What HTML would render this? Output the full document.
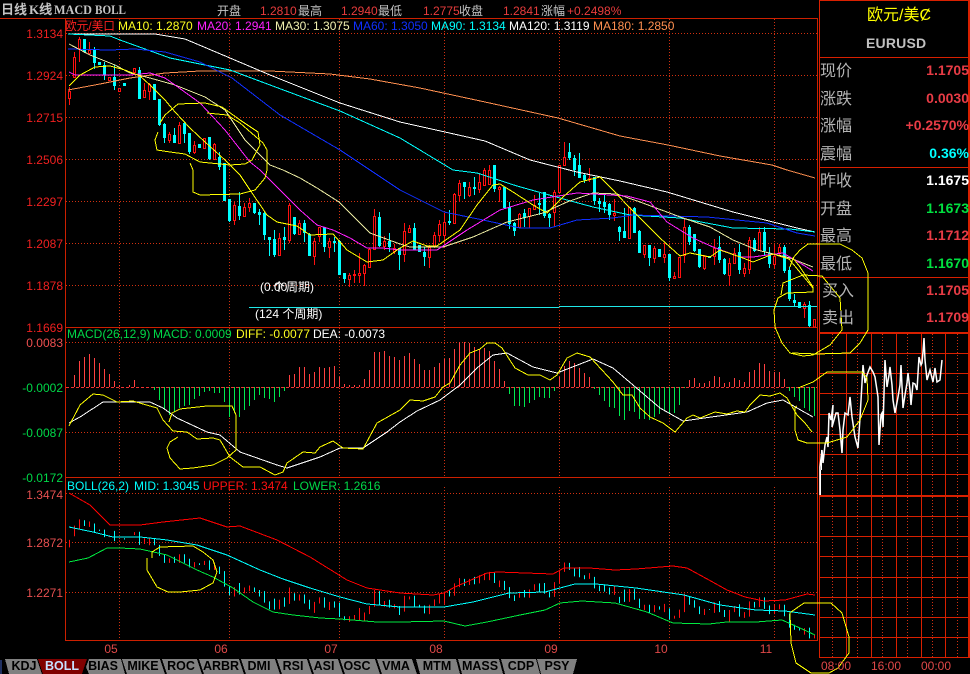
<!DOCTYPE html>
<html><head><meta charset="utf-8"><style>
html,body{margin:0;padding:0;background:#000;width:970px;height:674px;overflow:hidden}
svg{display:block;position:absolute;left:0;top:0}
text{font-family:"Liberation Sans","WenQuanYi Zen Hei","Noto Sans CJK SC",sans-serif;font-size:12px}
.ln{fill:none;shape-rendering:crispEdges}
.cv{fill:none;shape-rendering:crispEdges;stroke-width:1}
.lb{font-size:16px;fill:#b4b4b4}
.vl{font-size:14px;font-weight:bold;text-anchor:end}
.tb{font-weight:bold;text-anchor:middle;fill:#000;font-size:12.5px}
</style></head><body>
<svg width="970" height="674" viewBox="0 0 970 674" xmlns="http://www.w3.org/2000/svg">
<defs>
<path id="cw" d="M84.5 39V53M94.5 47V69M99.5 62V65M104.5 62V80M114.5 65V90M124.5 83V86M139.5 67V99M154.5 84V100M159.5 99V126M164.5 123V143M174.5 128V143M184.5 122V143M189.5 133V154M199.5 144V148M209.5 137V160M219.5 152V170M224.5 163V201M229.5 199V222M239.5 192V220M254.5 203V214M259.5 209V225M264.5 212V240M269.5 237V256M274.5 230V257M284.5 227V250M294.5 217V235M304.5 220V242M309.5 233V256M324.5 227V252M334.5 237V252M339.5 240V275M344.5 273V283M379.5 212V247M389.5 233V252M399.5 248V270M414.5 223V250M419.5 245V252M424.5 247V266M449.5 210V225M464.5 182V199M474.5 177V195M494.5 165V192M504.5 187V209M509.5 202V229M514.5 222V236M524.5 209V227M539.5 193V215M544.5 192V218M549.5 213V227M569.5 143V160M574.5 155V176M579.5 153V178M584.5 173V183M594.5 177V205M599.5 198V212M604.5 195V213M609.5 203V220M619.5 226V241M624.5 208V238M634.5 207V233M639.5 230V253M649.5 245V266M659.5 249V257M669.5 254V281M689.5 225V245M694.5 234V252M699.5 249V268M709.5 256V258M719.5 236V263M724.5 258V275M739.5 244V274M754.5 238V252M764.5 227V255M769.5 247V268M784.5 245V273M789.5 267V301M794.5 294V306M799.5 302V308M809.5 301V327"/>
<path id="cb" d="M84.5 39V52M94.5 49V63M99.5 62V65M104.5 65V75M114.5 77V86M124.5 83V86M139.5 70V99M154.5 84V100M159.5 99V125M164.5 124V138M174.5 135V143M184.5 123V134M189.5 133V152M199.5 144V148M209.5 137V159M219.5 157V167M224.5 163V201M229.5 199V221M239.5 206V216M254.5 203V213M259.5 212V215M264.5 213V235M269.5 237V240M274.5 239V255M284.5 237V240M294.5 217V234M304.5 223V233M309.5 234V256M324.5 227V247M334.5 241V243M339.5 241V275M344.5 273V279M379.5 217V246M389.5 241V247M399.5 248V255M414.5 228V250M419.5 245V252M424.5 252V257M449.5 221V223M464.5 182V187M474.5 187V189M494.5 165V189M504.5 187V208M509.5 207V224M514.5 223V231M524.5 213V218M539.5 203V205M544.5 192V216M549.5 214V218M569.5 152V158M574.5 158V170M579.5 165V178M584.5 175V180M594.5 177V201M599.5 201V204M604.5 202V207M609.5 204V215M619.5 227V232M624.5 231V238M634.5 208V233M639.5 231V253M649.5 245V258M659.5 249V257M669.5 254V278M689.5 227V242M694.5 234V251M699.5 249V267M709.5 256V258M719.5 247V260M724.5 259V274M739.5 252V270M754.5 240V251M764.5 232V251M769.5 253V264M784.5 247V271M789.5 270V299M794.5 300V303M799.5 302V308M809.5 305V326"/>
<path id="rw" d="M69.5 87V105M74.5 52V78M79.5 37V62M89.5 42V55M109.5 77V80M119.5 88V91M134.5 68V75M144.5 83V97M149.5 83V100M169.5 132V143M179.5 122V143M194.5 141V154M204.5 138V148M214.5 143V160M234.5 202V225M244.5 203V217M249.5 198V212M279.5 233V256M289.5 203V243M299.5 220V235M314.5 238V265M319.5 227V242M329.5 238V258M349.5 273V287M354.5 270V283M359.5 253V283M364.5 264V286M369.5 248V268M374.5 209V250M384.5 236V250M394.5 244V254M404.5 223V262M409.5 225V232M429.5 245V268M434.5 232V248M439.5 220V242M444.5 213V243M454.5 193V223M459.5 180V202M469.5 182V197M479.5 173V193M484.5 168V185M489.5 165V185M499.5 186V202M519.5 213V228M529.5 208V228M534.5 195V210M554.5 190V226M559.5 165V192M564.5 142V165M589.5 168V182M614.5 199V221M629.5 207V238M644.5 245V258M654.5 246V263M664.5 243V263M674.5 272V279M679.5 257V277M684.5 218V263M704.5 255V270M714.5 239V265M729.5 258V286M734.5 248V263M744.5 263V277M749.5 237V274M759.5 227V251M774.5 245V268M779.5 244V256M804.5 302V318M814.5 319V327"/>
<path id="rb" d="M68.5 91.5h2V98.5h-2zM73.5 57.5h2V77.5h-2zM78.5 39.5h2V48.5h-2zM88.5 50.5h2V53.5h-2zM108.5 77.5h2V80.5h-2zM118.5 88.5h2V91.5h-2zM133.5 68.5h2V72.5h-2zM143.5 90.5h2V97.5h-2zM148.5 84.5h2V91.5h-2zM168.5 134.5h2V140.5h-2zM178.5 125.5h2V143.5h-2zM193.5 145.5h2V152.5h-2zM203.5 138.5h2V148.5h-2zM213.5 144.5h2V159.5h-2zM233.5 205.5h2V220.5h-2zM243.5 207.5h2V216.5h-2zM248.5 203.5h2V207.5h-2zM278.5 238.5h2V255.5h-2zM288.5 205.5h2V240.5h-2zM298.5 223.5h2V234.5h-2zM313.5 241.5h2V256.5h-2zM318.5 227.5h2V236.5h-2zM328.5 241.5h2V247.5h-2zM348.5 275.5h2V279.5h-2zM353.5 274.5h2V275.5h-2zM358.5 273.5h2V275.5h-2zM363.5 265.5h2V273.5h-2zM368.5 249.5h2V267.5h-2zM373.5 216.5h2V249.5h-2zM383.5 241.5h2V246.5h-2zM393.5 248.5h2V251.5h-2zM403.5 231.5h2V254.5h-2zM408.5 228.5h2V232.5h-2zM428.5 247.5h2V257.5h-2zM433.5 235.5h2V246.5h-2zM438.5 224.5h2V235.5h-2zM443.5 222.5h2V235.5h-2zM453.5 194.5h2V223.5h-2zM458.5 183.5h2V195.5h-2zM468.5 187.5h2V195.5h-2zM478.5 182.5h2V189.5h-2zM483.5 170.5h2V185.5h-2zM488.5 170.5h2V184.5h-2zM498.5 187.5h2V189.5h-2zM518.5 214.5h2V227.5h-2zM528.5 208.5h2V216.5h-2zM533.5 205.5h2V209.5h-2zM553.5 192.5h2V212.5h-2zM558.5 165.5h2V192.5h-2zM563.5 157.5h2V165.5h-2zM588.5 178.5h2V179.5h-2zM613.5 213.5h2V215.5h-2zM628.5 207.5h2V238.5h-2zM643.5 245.5h2V254.5h-2zM653.5 248.5h2V258.5h-2zM663.5 254.5h2V257.5h-2zM673.5 276.5h2V278.5h-2zM678.5 257.5h2V277.5h-2zM683.5 227.5h2V255.5h-2zM703.5 256.5h2V268.5h-2zM713.5 248.5h2V256.5h-2zM728.5 263.5h2V275.5h-2zM733.5 253.5h2V263.5h-2zM743.5 268.5h2V273.5h-2zM748.5 240.5h2V269.5h-2zM758.5 232.5h2V250.5h-2zM773.5 256.5h2V264.5h-2zM778.5 247.5h2V252.5h-2zM803.5 304.5h2V308.5h-2zM813.5 319.5h2V327h-2z"/>
</defs>

<!-- frame lines -->
<g class="ln" stroke="#cc2000">
<path d="M0 18.5H818M65.5 18V640M817.5 18V640M65 327.5H818M65 477.5H818M65 640.5H818"/>
</g>
<g class="ln" stroke="#d82000">
<path d="M819.5 0V657M968.5 0V657M969.5 0V657M819 .5H970M819 57.5H970M819 167.5H970M819 277.5H970M819 332.5H970M819 333.5H970M819 495.5H970M819 496.5H970"/>
<path d="M846.5 334V657M871.5 334V657M896.5 334V657M921.5 334V657M945.5 334V657M819 353.5H970M819 373.5H970M819 393.5H970M819 414.5H970M819 434.5H970M819 454.5H970M819 474.5H970M819 516.5H970M819 536.5H970M819 556.5H970M819 577.5H970M819 597.5H970M819 617.5H970M819 637.5H970M819 657.5H970"/>
</g>
<g class="ln" stroke="#d03010" stroke-dasharray="1 2">
<path d="M66 33.5H817M66 75.5H817M66 117.5H817M66 159.5H817M66 201.5H817M66 243.5H817M66 285.5H817M66 342.5H817M66 432.5H817M66 493.5H817M66 542.5H817M66 592.5H817"/>
<path d="M119.5 19V327M229.5 19V327M339.5 19V327M444.5 19V327M559.5 19V327M669.5 19V327M774.5 19V327M119.5 328V477M229.5 328V477M339.5 328V477M444.5 328V477M559.5 328V477M669.5 328V477M774.5 328V477M119.5 487V640M229.5 487V640M339.5 487V640M444.5 487V640M559.5 487V640M669.5 487V640M774.5 487V640"/>
<path d="M832.5 334V495M857.5 334V495M882.5 334V495M907.5 334V495M932.5 334V495M957.5 334V495M832.5 497V657M857.5 497V657M882.5 497V657M907.5 497V657M932.5 497V657M957.5 497V657"/>
</g>
<path class="ln" stroke="#f03030" stroke-dasharray="3 2" d="M66 387.5H817"/>

<!-- main candles -->
<use href="#rw" stroke="#ff1010" fill="none" shape-rendering="crispEdges"/>
<use href="#cw" stroke="#00ffff" fill="none" shape-rendering="crispEdges"/>
<use href="#cb" stroke="#00ffff" stroke-width="3" fill="none" shape-rendering="crispEdges"/>
<use href="#rb" stroke="#ff1010" fill="#000" shape-rendering="crispEdges"/>

<!-- MA lines -->
<polyline class="ln" stroke="#ff9050" points="68,90 100,84 130,78 165,73 200,71 270,71 330,74 370,79 420,88 485,102 558,118 620,136 668,145 720,156 772,165 787,170 815,178"/>
<polyline class="ln" stroke="#ffffff" points="68,34 155,34 185,39 230,58 270,75 340,103 400,122 445,132 485,141 530,160 577,172 620,181 667,192 733,212 797,228 815,232"/>
<polyline class="ln" stroke="#00ffff" points="68,34 110,36 120,40 170,58 230,70 270,85 340,111 400,138 453,170 477,173 517,186 567,200 593,207 630,215 680,218 733,228 790,229 815,232"/>
<polyline class="ln" stroke="#1030ff" points="68,49 110,50 135,49 165,52 200,62 232,78 280,115 340,150 370,170 400,190 444,212 483,220 520,228 550,228 577,220 613,218 633,215 707,217 767,223 797,233 815,236"/>
<polyline class="ln" stroke="#e8e8a0" points="69,44 90,55 115,65 130,73 150,78 175,85 205,97 225,110 245,140 270,165 283,170 300,178 317,188 339,202 357,220 370,233 400,244 410,247 443,247 473,237 507,222 543,213 567,202 593,193 617,194 640,202 683,218 710,227 733,240 757,250 790,258 813,267"/>
<polyline class="ln" stroke="#ff20ff" points="69,72 75,75 130,75 150,73 165,78 175,85 200,103 225,130 250,162 260,170 300,210 317,225 333,230 350,238 367,248 383,248 400,250 437,250 467,230 500,210 533,200 577,193 627,196 650,202 667,222 693,238 713,247 740,257 753,257 767,255 783,253 800,263 813,271"/>
<polyline class="ln" stroke="#ffff00" points="69,86 80,75 95,67 110,66 125,70 140,76 150,85 165,100 175,112 190,128 205,142 225,160 240,175 250,190 267,215 277,222 297,226 310,235 333,234 347,250 367,262 383,260 400,248 413,241 427,246 437,246 460,230 477,205 493,185 500,184 513,192 533,205 547,213 563,197 580,182 600,177 613,190 627,205 640,218 660,238 680,256 690,253 710,257 720,250 743,258 753,262 773,254 789,259 813,288"/>

<!-- cyan line -->
<path class="ln" stroke="#20e8e8" d="M249 307.5H559M559 306.5H817"/>

<!-- MACD hist -->
<path class="ln" stroke="#ff4040" d="M74.5 375V387M79.5 361V387M84.5 357V387M89.5 354V387M94.5 358V387M99.5 363V387M104.5 369V387M109.5 374V387M114.5 381V387M119.5 385V387M129.5 385V387M134.5 380V387M289.5 375V387M294.5 374V387M299.5 367V387M304.5 367V387M309.5 374V387M314.5 372V387M319.5 367V387M324.5 368V387M329.5 367V387M334.5 366V387M339.5 377V387M344.5 384V387M349.5 385V387M354.5 385V387M359.5 385V387M364.5 379V387M369.5 370V387M374.5 352V387M379.5 352V387M384.5 351V387M389.5 356V387M394.5 357V387M399.5 360V387M404.5 356V387M409.5 353V387M414.5 359V387M419.5 364V387M424.5 370V387M429.5 370V387M434.5 367V387M439.5 363V387M444.5 359V387M449.5 358V387M454.5 349V387M459.5 342V387M464.5 342V387M469.5 343V387M474.5 347V387M479.5 349V387M484.5 348V387M489.5 351V387M494.5 361V387M499.5 369V387M504.5 381V387M559.5 377V387M564.5 366V387M569.5 361V387M574.5 363V387M579.5 368V387M584.5 373V387M589.5 377V387M689.5 380V387M694.5 378V387M699.5 383V387M704.5 383V387M709.5 381V387M714.5 376V387M719.5 377V387M724.5 383V387M729.5 382V387M734.5 378V387M739.5 380V387M744.5 382V387M749.5 372V387M754.5 370V387M759.5 363V387M764.5 364V387M769.5 371V387M774.5 372V387M779.5 372V387M784.5 379V387"/>
<path class="ln" stroke="#00e850" d="M154.5 387V390M159.5 387V400M164.5 387V409M169.5 387V415M174.5 387V412M179.5 387V408M184.5 387V406M189.5 387V405M194.5 387V399M199.5 387V396M204.5 387V392M209.5 387V391M214.5 387V393M219.5 387V393M224.5 387V402M229.5 387V417M234.5 387V413M239.5 387V417M244.5 387V410M249.5 387V406M254.5 387V400M259.5 387V395M264.5 387V398M269.5 387V399M274.5 387V402M279.5 387V397M284.5 387V391M509.5 387V394M514.5 387V406M519.5 387V406M524.5 387V407M529.5 387V403M534.5 387V400M539.5 387V397M544.5 387V398M549.5 387V398M554.5 387V391M594.5 387V389M599.5 387V395M604.5 387V401M609.5 387V407M614.5 387V408M619.5 387V416M624.5 387V420M629.5 387V411M634.5 387V412M639.5 387V419M644.5 387V419M649.5 387V420M654.5 387V417M659.5 387V414M664.5 387V411M669.5 387V413M674.5 387V413M679.5 387V405M684.5 387V388M789.5 387V391M794.5 387V397M799.5 387V401M804.5 387V408M809.5 387V411M814.5 387V416"/>

<!-- DIFF / DEA -->
<polyline class="ln" stroke="#ffffff" points="69,423 80,417 103,402 123,402 150,402 163,408 177,418 207,432 220,435 240,452 277,465 287,468 320,457 340,448 363,448 387,432 400,422 417,411 440,400 460,385 477,368 493,355 507,353 533,367 557,373 593,359 613,368 633,385 660,408 683,421 747,412 767,403 783,400 813,417"/>
<polyline class="ln" stroke="#ffff00" points="69,426 80,405 93,394 103,395 117,402 133,401 143,404 157,408 163,420 173,431 187,432 197,439 213,438 220,440 230,457 243,467 260,467 275,475 283,472 287,463 303,452 315,453 320,447 333,441 343,448 363,449 377,423 400,410 410,400 423,401 435,397 443,387 450,383 460,365 470,353 480,349 487,343 495,343 502,348 515,368 528,375 540,375 550,380 557,375 567,358 577,353 590,357 613,382 623,395 632,395 640,408 650,417 663,423 675,432 687,418 693,415 700,418 715,412 727,414 737,411 745,412 750,405 760,395 770,396 780,393 787,398 797,415 805,423 812,432"/>

<!-- BOLL panel -->
<g transform="translate(0 518) scale(1 .41) translate(0 -33.5)" shape-rendering="crispEdges">
<use href="#rw" stroke="#ff1010" fill="none"/>
<use href="#cw" stroke="#00ffff" fill="none"/>
</g>
<polyline class="ln" stroke="#ff0000" points="69,493 90,505 110,525 140,525 163,522 200,518 227,527 240,526 277,540 310,557 347,580 367,588 400,593 433,595 444,593 455,587 487,573 498,572 553,574 564,568 589,568 615,570 636,569 673,566 687,568 709,580 727,590 745,597 764,601 785,600 807,594 815,595"/>
<polyline class="ln" stroke="#00ffff" points="69,527 93,532 113,537 140,537 167,540 197,545 227,555 260,570 283,579 310,588 340,597 367,604 400,607 444,607 473,602 509,593 545,592 575,584 596,584 636,588 684,595 720,605 756,610 785,611 815,615"/>
<polyline class="ln" stroke="#00e840" points="69,562 88,558 107,548 120,548 140,549 167,555 197,570 213,577 233,588 253,602 273,612 293,615 320,618 340,619 377,622 400,622 444,621 465,626 487,622 520,615 545,610 560,603 582,601 615,603 647,612 673,623 709,624 727,622 756,622 782,620 800,628 815,635"/>

<!-- intraday -->
<polyline fill="none" stroke="#fff" stroke-width="1.5" points="820,495 820,467 822,450 823,463 825,445 827,437 828,447 829,413 831,420 833,405 832,427 836,413 838,413 840,430 842,453 843,430 845,413 848,415 850,397 852,417 855,437 858,448 860,418 862,383 863,365 865,383 867,375 870,367 873,372 875,377 878,397 879,445 881,415 882,413 883,427 885,360 887,387 889,375 890,367 892,385 893,400 895,413 898,397 900,385 901,365 903,408 905,395 907,383 908,373 910,390 911,405 913,383 915,384 917,390 919,357 921,365 922,363 923,352 924,338 925,360 927,380 930,370 933,382 935,368 937,382 940,380 942,360"/>
<path class="ln" stroke="#fff" d="M820.5 470V495M821.5 450V470"/>

<!-- hand-drawn annotations -->
<g class="cv" stroke="#ffff00">
<polyline points="160,123 165,115 178,104 205,103 222,107 240,120 258,132 260,145 252,160 245,164 230,165 200,162 185,154 170,152 157,150 155,140 158,132"/>
<polyline points="207,113 227,115 240,123 263,143 267,150 267,170 265,178 255,190 240,194 200,195 193,192 193,170 190,163"/>
<polyline points="790,267 793,258 800,250 808,244 840,244 852,250 862,258 868,273 868,330 860,343 850,353 817,354 792,353"/>
<polyline points="781,295 783,283 803,275 822,276 840,298 842,330 830,345 813,355 803,356 790,353 782,343 775,327 774,310 778,298 787,293 813,292 813,287 800,267 793,258"/>
<polyline points="798,388 813,382 827,372 862,372 867,378 868,400 860,420 847,437 827,443 807,443 798,440 795,430 795,407 797,406"/>
<polyline points="169,422 172,413 180,409 207,406 232,406 236,415 236,450 227,458 213,465 193,468 180,469 170,458 167,448 170,442 178,437"/>
<polyline points="152,558 152,552 160,547 193,546 203,552 213,560 217,572 213,583 200,590 180,592 168,592 157,587 147,570 147,558"/>
<polyline points="791,612 804,603 831,603 842,613 849,637 849,653 838,668 829,673 811,673 796,663 791,643 790,612"/>
</g>

<!-- tabs -->
<rect x="0" y="660" width="2" height="14" fill="#203060"/>
<g fill="#808080" shape-rendering="crispEdges">
<polygon points="5,659 37,659 42,674 9,674"/>
<polygon points="89,659 121,659 125,674 89,674 86,667"/>
<polygon points="122,659 160,659 165,674 127,674"/>
<polygon points="162,659 197,659 202,674 167,674"/>
<polygon points="199,659 239,659 244,674 204,674"/>
<polygon points="241,659 275,659 280,674 246,674"/>
<polygon points="277,659 307,659 312,674 282,674"/>
<polygon points="309,659 338,659 343,674 314,674"/>
<polygon points="340,659 375,659 380,674 345,674"/>
<polygon points="377,659 412,659 417,674 382,674"/>
<polygon points="416,659 456,659 460,674 420,674"/>
<polygon points="458,659 499,659 503,674 462,674"/>
<polygon points="501,659 536,659 540,674 505,674"/>
<polygon points="537,659 577,659 573,674 541,674"/>
</g>
<polygon points="38,659 87,659 82,674 43,674" fill="#800000" shape-rendering="crispEdges"/>
<text class="tb" x="24" y="670">KDJ</text>
<text class="tb" x="62" y="670" style="fill:#c8e0ff">BOLL</text>
<text class="tb" x="103" y="670">BIAS</text>
<text class="tb" x="143" y="670">MIKE</text>
<text class="tb" x="181" y="670">ROC</text>
<text class="tb" x="221" y="670">ARBR</text>
<text class="tb" x="259" y="670">DMI</text>
<text class="tb" x="293" y="670">RSI</text>
<text class="tb" x="324" y="670">ASI</text>
<text class="tb" x="357" y="670">OSC</text>
<text class="tb" x="396" y="670">VMA</text>
<text class="tb" x="437" y="670">MTM</text>
<text class="tb" x="480" y="670">MASS</text>
<text class="tb" x="521" y="670">CDP</text>
<text class="tb" x="557" y="670">PSY</text>

<!-- header -->
<g fill="#c4c4c4" font-weight="bold">
<text x="1" y="14" style="font-size:13px">日线</text>
<text x="29" y="14" style="font-family:'Liberation Serif','WenQuanYi Zen Hei',serif;font-size:13px">K线</text>
<text x="54" y="14" textLength="38" lengthAdjust="spacingAndGlyphs" style="font-family:'Liberation Serif',serif;font-size:13px">MACD</text>
<text x="95" y="14" textLength="31" lengthAdjust="spacingAndGlyphs" style="font-family:'Liberation Serif',serif;font-size:13px">BOLL</text>
</g>
<g fill="#c4c4c4">
<text x="217" y="15">开盘</text><text x="298" y="15">最高</text><text x="378" y="15">最低</text><text x="459" y="15">收盘</text><text x="541" y="15">涨幅</text>
</g>
<g fill="#e83c3c">
<text x="260" y="15">1.2810</text><text x="341" y="15">1.2940</text><text x="423" y="15">1.2775</text><text x="503" y="15">1.2841</text><text x="567" y="15">+0.2498%</text>
</g>

<!-- legends -->
<text x="65" y="30" fill="#ff2020" textLength="50" lengthAdjust="spacingAndGlyphs">欧元/美口</text>
<text x="118" y="30" fill="#ffff20">MA10: 1.2870</text>
<text x="197" y="30" fill="#ff20ff">MA20: 1.2941</text>
<text x="275" y="30" fill="#f0f0b0">MA30: 1.3075</text>
<text x="353" y="30" fill="#1030ff">MA60: 1.3050</text>
<text x="431" y="30" fill="#00ffff">MA90: 1.3134</text>
<text x="509" y="30" fill="#ffffff">MA120: 1.3119</text>
<text x="593" y="30" fill="#ff9050">MA180: 1.2850</text>

<text x="67" y="338" fill="#00d848">MACD(26,12,9)</text>
<text x="153" y="338" fill="#00d848">MACD: 0.0009</text>
<text x="236" y="338" fill="#ffff20">DIFF: -0.0077</text>
<text x="313" y="338" fill="#ffffff">DEA: -0.0073</text>

<text x="67" y="490" fill="#00ffff">BOLL(26,2)</text>
<text x="134" y="490" fill="#00ffff">MID: 1.3045</text>
<text x="203" y="490" fill="#ff1010">UPPER: 1.3474</text>
<text x="293" y="490" fill="#00d848">LOWER: 1.2616</text>

<!-- y axes -->
<g text-anchor="end">
<g fill="#f02020">
<text x="63" y="38">1.3134</text><text x="63" y="80">1.2924</text><text x="63" y="122">1.2715</text><text x="63" y="164">1.2506</text><text x="63" y="206">1.2297</text><text x="63" y="248">1.2087</text><text x="63" y="290">1.1878</text><text x="63" y="332">1.1669</text>
</g>
<text x="63" y="347" fill="#f05050">0.0083</text>
<g fill="#00d848"><text x="63" y="392">-0.0002</text><text x="63" y="437">-0.0087</text><text x="63" y="482">-0.0172</text></g>
<g fill="#e85050"><text x="63" y="499">1.3474</text><text x="63" y="547">1.2872</text><text x="63" y="597">1.2271</text></g>
</g>

<!-- x axis -->
<g fill="#e04848" text-anchor="middle">
<text x="111" y="653">05</text><text x="221" y="653">06</text><text x="331" y="653">07</text><text x="436" y="653">08</text><text x="551" y="653">09</text><text x="661" y="653">10</text><text x="766" y="653">11</text>
</g>
<g fill="#e04848">
<text x="821" y="670">08:00</text><text x="871" y="670">16:00</text><text x="921" y="670">00:00</text>
</g>

<!-- chart notes -->
<g fill="#ffffff">
<text x="260" y="291">(0.00</text><text x="273" y="291">个</text><text x="286" y="291">周期)</text>
<text x="255" y="318">(124 个周期)</text>
</g>

<!-- right panel -->
<text x="867" y="20" fill="#ffff00" style="font-size:16px">欧元/美Ȼ</text>
<text x="866" y="48" fill="#c0c0c0" style="font-size:14px;font-weight:bold;letter-spacing:.2px">EURUSD</text>
<g>
<text class="lb" x="820" y="76">现价</text>
<text class="lb" x="820" y="104">涨跌</text>
<text class="lb" x="820" y="131">涨幅</text>
<text class="lb" x="820" y="159">震幅</text>
<text class="lb" x="820" y="186">昨收</text>
<text class="lb" x="820" y="214">开盘</text>
<text class="lb" x="820" y="241">最高</text>
<text class="lb" x="820" y="269">最低</text>
<text class="lb" x="822" y="296">买入</text>
<text class="lb" x="822" y="323">卖出</text>
</g>
<text class="vl" x="969" y="75" fill="#e83c46">1.1705</text>
<text class="vl" x="969" y="103" fill="#e83c46">0.0030</text>
<text class="vl" x="969" y="130" fill="#e83c46">+0.2570%</text>
<text class="vl" x="969" y="158" fill="#00ffff">0.36%</text>
<text class="vl" x="969" y="185" fill="#ffffff">1.1675</text>
<text class="vl" x="969" y="213" fill="#00e040">1.1673</text>
<text class="vl" x="969" y="240" fill="#e83c46">1.1712</text>
<text class="vl" x="969" y="268" fill="#00e040">1.1670</text>
<text class="vl" x="969" y="295" fill="#e83c46">1.1705</text>
<text class="vl" x="969" y="322" fill="#e83c46">1.1709</text>
</svg>
</body></html>
